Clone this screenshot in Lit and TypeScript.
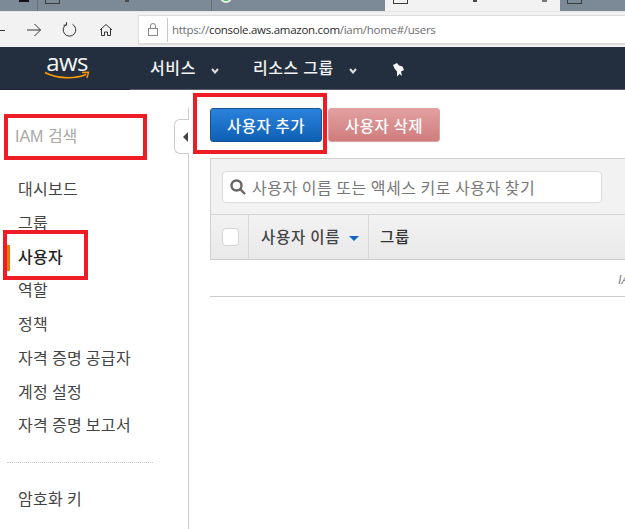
import { LitElement, html, css } from "lit";
import { customElement } from "lit/decorators.js";

@customElement("app-root")
export class AppRoot extends LitElement {
  static styles = css`
    :host { display: block; width: 625px; height: 529px; position: relative; overflow: hidden; background: #fff; font-family: "Noto Sans CJK KR", "Noto Sans", sans-serif; }
    * { box-sizing: border-box; }
    .tabs { height: 11px; background: #7c8996; display: flex; overflow: hidden; }
    .tab { height: 11px; border-right: 1px solid #66707c; flex: none; display: flex; }
    .tab.t0 { width: 38px; padding-left: 19px; }
    .tab.t1 { width: 174px; padding-left: 7px; }
    .tab.t2 { width: 173px; padding-left: 8px; border-right: 0; }
    .tab.active { width: 175px; background: #f2f2f2; border-right: 0; padding-left: 8px; }
    .tab.last { width: 65px; border-right: 0; padding-left: 7px; }
    .doc { display: block; width: 15px; height: 4px; border: 1px solid #3c3c3c; border-top: 0; flex: none; }
    .blk { display: block; width: 10px; height: 2px; background: #111; }
    .dot { display: block; width: 12px; height: 12px; margin-top: -9px; border-radius: 50%; background: #3fb55a; border: 2px solid #e8f2e8; }
    .tail { display: block; width: 4px; height: 2px; background: #4a4a4a; margin-left: 65px; flex: none; }
    .tail2 { display: block; width: 5px; height: 2px; background: #777; margin-left: 65px; flex: none; }
    .toolbar { height: 36px; background: #f2f2f2; display: flex; align-items: center; border-top: 1px solid #e6e6e6; }
    .navbtns { width: 138px; flex: none; display: flex; align-items: center; height: 34px; }
    .navbtns svg { display: block; flex: none; }
    .nb1 { margin-left: 22px; }
    .nb2 { margin-left: 21px; }
    .nb3 { margin-left: 22px; }
    .addr { flex: 1; height: 29px; background: #fff; border: 1px solid #dcdcdc; border-right: 0; display: flex; align-items: center; box-shadow: 0 1px 1px #ddd; }
    .lock { width: 28px; display: flex; justify-content: center; flex: none; }
    .sep { width: 1px; height: 24px; background: #c9c9c9; margin-right: 4px; flex: none; }
    .url { font: 11.5px "Open Sans", sans-serif; color: #6e6e6e; letter-spacing: -0.28px; white-space: nowrap; }
    .url b { font-weight: 400; color: #2b2b2b; }
    .navbar { height: 42px; background: #232f3e; display: flex; align-items: center; color: #f3f3f3; }
    .navline { height: 1px; background: linear-gradient(90deg, #1b2531 130px, #56606c 130px); }
    .logo { margin-left: 44px; width: 46px; flex: none; display: flex; flex-direction: column; align-items: center; margin-top: -5px; }
    .logo span { font: 400 24px/19px "Open Sans", sans-serif; letter-spacing: -0.6px; color: #f5f5f5; height: 19px; }
    .logo svg { display: block; }
    .nav-a { font-size: 16px; font-weight: 500; margin-left: 60px; line-height: 20px; margin-top: -2px; letter-spacing: 0.6px; white-space: nowrap; }
    .nav-b { font-size: 16px; font-weight: 500; margin-left: 34px; line-height: 20px; margin-top: -2px; letter-spacing: 0.6px; white-space: nowrap; }
    .chev { display: block; margin-left: 15px; margin-top: 5px; flex: none; }
    .pin { display: block; margin-left: 35px; margin-top: 3px; flex: none; }
    .body { display: flex; height: 439px; }
    .side { width: 188px; flex: none; position: relative; }
    .search { margin: 30px 0 0 10px; height: 33px; font: 16px "Liberation Sans", "Noto Sans CJK KR", sans-serif; color: #a8a8a8; display: flex; align-items: center; padding-left: 5px; width: 130px; line-height: 20px; }
    .menu { margin-top: 19px; display: flex; flex-direction: column; }
    .item { height: 33.75px; padding-left: 18px; font-size: 16px; line-height: 33.75px; color: #444; position: relative; letter-spacing: 0.3px; white-space: nowrap; }
    .item.on { color: #222; font-weight: 500; }
    .item.on::before { content: ""; position: absolute; left: 7px; top: 5px; width: 3px; height: 26px; background: #e47911; }
    .dots { border-top: 1px dotted #c8c8c8; margin: 20px 35px 0 7px; }
    .enc { padding-left: 18px; margin-top: 24px; font-size: 16px; line-height: 22px; color: #444; letter-spacing: 0.3px; }
    .toggle { position: absolute; right: -1px; top: 29px; width: 15px; height: 35px; background: #fff; border: 1px solid #ccc; border-right: 0; border-radius: 6px 0 0 6px; display: flex; align-items: center; justify-content: flex-end; padding-right: 1px; }
    .tri { width: 0; height: 0; border: 5px solid transparent; border-left-width: 0; border-right: 5px solid #444; }
    .rail { width: 1px; background: #ccc; margin-top: 18px; flex: none; }
    .main { flex: 1; padding: 18px 0 0 21px; min-width: 0; }
    .btns { display: flex; gap: 6px; }
    .btn { width: 112px; height: 34px; border-radius: 3px; color: #fff; font-size: 15.5px; font-weight: 500; display: flex; align-items: center; justify-content: center; letter-spacing: 0.55px; white-space: nowrap; }
    .add { background: linear-gradient(#2b82dc, #0e60b4); border: 1px solid #15528f; }
    .del { background: linear-gradient(#e2a0a0, #d07c7c); border: 1px solid #dda0a0; }
    .panel { margin-top: 16px; border: 1px solid #d0d0d0; border-right: 0; border-bottom: 1px solid #ccc; background: #f2f2f2; }
    .filter { height: 56px; padding: 12px 0 0 11px; border-bottom: 1px solid #d5d5d5; }
    .finput { width: 380px; height: 32px; background: #fff; border: 1px solid #ddd; border-radius: 4px; display: flex; align-items: center; padding-left: 6px; font-size: 16px; color: #777; gap: 5px; letter-spacing: 0.5px; white-space: nowrap; padding-bottom: 1px; }
    .finput svg { flex: none; }
    .thead { height: 44px; display: flex; background: linear-gradient(#f2f2f2, #e9e9e9); font-size: 15.5px; font-weight: 500; }
    .c0 { width: 38px; border-right: 1px solid #d8d8d8; display: flex; align-items: center; padding-left: 11px; flex: none; }
    .check { width: 17px; height: 18px; background: #fff; border: 1px solid #d5d5d5; border-radius: 4px; }
    .c1 { width: 120px; border-right: 1px solid #d8d8d8; display: flex; align-items: center; padding: 0 0 3px 12px; color: #444; flex: none; letter-spacing: 0.75px; white-space: nowrap; }
    .sort { width: 0; height: 0; border: 5px solid transparent; border-top: 5px solid #1166bb; border-bottom: 0; margin-left: 9px; margin-top: 5px; }
    .c2 { padding: 0 0 3px 11px; display: flex; align-items: center; color: #333; letter-spacing: 0.75px; }
    .row { height: 37px; border-bottom: 1px solid #ccc; display: flex; align-items: center; justify-content: flex-end; font: italic 13px "Liberation Sans", sans-serif; color: #888; overflow: hidden; padding-top: 2px; }
    .row span { width: 7px; overflow: hidden; white-space: nowrap; }
    .mark { position: absolute; border: 4px solid #ee1c25; pointer-events: none; }
    .m1 { left: 4px; top: 114px; width: 143px; height: 46px; }
    .m2 { left: 3px; top: 230px; width: 85px; height: 50px; }
    .m3 { left: 193px; top: 93px; width: 134px; height: 61px; }
  `;

  render() {
    const items = ["대시보드", "그룹", "사용자", "역할", "정책", "자격 증명 공급자", "계정 설정", "자격 증명 보고서"];
    return html`
      <div class="tabs">
        <div class="tab t0"><i class="blk"></i></div>
        <div class="tab t1"><i class="doc"></i><i class="tail"></i></div>
        <div class="tab t2"><i class="dot"></i></div>
        <div class="tab active"><i class="doc"></i><i class="tail"></i><i class="tail2"></i></div>
        <div class="tab last"><i class="doc"></i></div>
      </div>
      <div class="toolbar">
        <div class="navbtns">
          <svg width="5" height="16" viewBox="0 0 5 16" fill="none" stroke="#333" stroke-width="1"><path d="M0 8.500h5"/></svg>
          <svg class="nb1" width="14" height="14" viewBox="0 0 14 14" fill="none" stroke="#333" stroke-width="1"><path d="M0 7h13.500M7.500 1 13.500 7l-6 6"/></svg>
          <svg class="nb2" width="15" height="15" viewBox="0 0 15 15" fill="none" stroke="#333" stroke-width="1"><path d="M4.500 2.300a6.300 6.300 0 1 0 6 0"/><path d="M4.500 .2v3h-3"/></svg>
          <svg class="nb3" width="14" height="14" viewBox="0 0 14 14" fill="none" stroke="#333" stroke-width="1"><path d="M1 7 7 1.500 13 7M2.500 6v6.500h3V9h3v3.500h3V6"/></svg>
        </div>
        <div class="addr">
          <div class="lock"><svg width="10" height="13" viewBox="0 0 10 13" fill="none" stroke="#888"><rect x=".5" y="5.500" width="9" height="7"/><path d="M2.500 5.500V3a2.500 2.500 0 0 1 5 0v2.500"/></svg></div>
          <div class="sep"></div>
          <div class="url">https://<b>console.aws.amazon.com</b>/iam/home#/users</div>
        </div>
      </div>
      <div class="navbar">
        <div class="logo">
          <span>aws</span>
          <svg width="46" height="9" viewBox="0 0 46 9" fill="none"><path d="M1 1.500C12 7.500 30 8.500 42 3.500" stroke="#f90" stroke-width="1.600"/><path d="M38 1.500 44.500 1.200 43 7" stroke="#f90" stroke-width="1.400"/></svg>
        </div>
        <div class="nav-a">서비스</div>
        <svg class="chev" width="8" height="6" viewBox="0 0 8 6" fill="none" stroke="#ddd" stroke-width="2"><path d="M1 1 4 4.500 7 1"/></svg>
        <div class="nav-b">리소스 그룹</div>
        <svg class="chev" width="8" height="6" viewBox="0 0 8 6" fill="none" stroke="#ddd" stroke-width="2"><path d="M1 1 4 4.500 7 1"/></svg>
        <svg class="pin" width="14" height="14" viewBox="0 0 14 14" fill="#f5f5f5"><path d="M1 2 5 0l2 2.500 3.500 1L12 7 9 8.500 10 13 7.500 11 5 13.500 5 8.500 2.500 5.500z"/></svg>
      </div>
      <div class="navline"></div>
      <div class="body">
        <div class="side">
          <div class="search">IAM 검색</div>
          <div class="menu">
            ${items.map((t, i) => html`<div class="item ${i === 2 ? "on" : ""}">${t}</div>`)}
          </div>
          <div class="dots"></div>
          <div class="enc">암호화 키</div>
          <div class="toggle"><div class="tri"></div></div>
        </div>
        <div class="rail"></div>
        <div class="main">
          <div class="btns">
            <div class="btn add">사용자 추가</div>
            <div class="btn del">사용자 삭제</div>
          </div>
          <div class="panel">
            <div class="filter">
              <div class="finput">
                <svg width="18" height="18" viewBox="0 0 18 18" fill="none" stroke="#666" stroke-width="2.400"><circle cx="7.500" cy="7.500" r="5"/><path d="M11.500 11.500 16 16"/></svg>
                <span>사용자 이름 또는 액세스 키로 사용자 찾기</span>
              </div>
            </div>
            <div class="thead">
              <div class="c0"><div class="check"></div></div>
              <div class="c1">사용자 이름<span class="sort"></span></div>
              <div class="c2">그룹</div>
            </div>
          </div>
          <div class="row"><span>IAM</span></div>
        </div>
      </div>
      <div class="mark m1"></div>
      <div class="mark m2"></div>
      <div class="mark m3"></div>
    `;
  }
}
